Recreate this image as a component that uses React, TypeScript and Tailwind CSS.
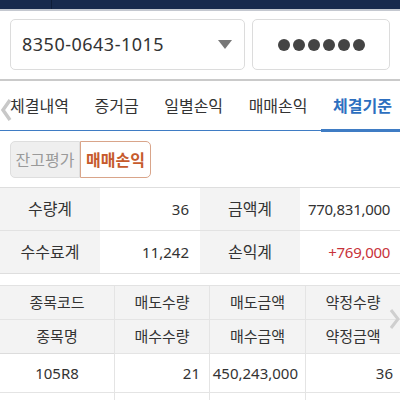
const font = { fontFamily: '"Noto Sans", "Noto Sans CJK KR", sans-serif' };

function Tabs() {
  const tabs = ['체결내역', '증거금', '일별손익', '매매손익', '체결기준'];
  return (
    <div className="relative h-[50px] flex items-center border-b border-[#3f7cc4]">
      <svg className="absolute left-0 top-[16px]" width="12" height="26" viewBox="0 0 12 26">
        <path d="M10 3 L3 13 L10 23" stroke="#c8c8c8" strokeWidth="3.5" fill="none" />
      </svg>
      <div className="flex w-full justify-between pl-[10px] pr-[8px] text-[16px] text-[#333]">
        {tabs.map((t, i) => (
          <span key={t} className={i === 4 ? 'font-bold text-[#2d6fbf]' : ''}>{t}</span>
        ))}
      </div>
      <div className="absolute right-0 bottom-[-2px] h-[3px] w-[79px] bg-[#3f7cc4]" />
    </div>
  );
}

export default function App() {
  const cell = 'flex items-center h-[42px] text-[15px]';
  return (
    <div className="w-[400px] h-[400px] bg-white overflow-hidden text-[#333]" style={font}>
      <div className="h-[9px] bg-[#182a4d] flex">
        <div className="w-[52px] border-r border-[#0f1d38]" />
      </div>
      <div className="h-[2px] bg-[#c4c8d0]" />
      <div className="flex gap-[7px] px-[10px] pt-[8px] pb-[9px]">
        <div className="w-[235px] h-[51px] border border-[#dcdcdc] rounded-[5px] flex items-center pl-[11px] pr-[12px] justify-between">
          <span className="text-[18px] tracking-[0.5px]">8350-0643-1015</span>
          <svg width="14" height="10" viewBox="0 0 14 10"><path d="M0 0 H14 L7 9 Z" fill="#777" /></svg>
        </div>
        <div className="flex-1 h-[51px] border border-[#dcdcdc] rounded-[5px] flex items-center justify-center gap-[3px]">
          {Array.from({ length: 6 }).map((_, i) => (
            <span key={i} className="w-[12px] h-[12px] rounded-full bg-[#444]" />
          ))}
        </div>
      </div>
      <div className="h-[2px] bg-[#cacaca]" />
      <Tabs />
      <div className="px-[10px] pt-[10px] pb-[9px] flex">
        <div className="flex h-[37px] text-[16px]">
          <div className="w-[70px] flex items-center justify-center bg-[#efefef] border border-[#dedede] rounded-l-[5px] text-[#9a9a9a]">잔고평가</div>
          <div className="w-[71px] flex items-center justify-center bg-white border border-[#d9a58a] rounded-r-[5px] text-[#c65a2c] font-bold">매매손익</div>
        </div>
      </div>
      <div className="border-t border-b border-[#dedede]">
        {[['수량계', '36', '금액계', '770,831,000', false], ['수수료계', '11,242', '손익계', '+769,000', true]].map((r, i) => (
          <div key={i} className={`grid grid-cols-[100px_100px_100px_100px] ${i === 0 ? 'border-b border-[#e2e2e2]' : ''}`}>
            <div className={`${cell} justify-center bg-[#f3f3f3] text-[16px]`}>{r[0]}</div>
            <div className={`${cell} justify-end pr-[11px]`}>{r[1]}</div>
            <div className={`${cell} justify-center bg-[#f3f3f3] text-[16px]`}>{r[2]}</div>
            <div className={`${cell} justify-end pr-[10px] tracking-[-0.3px] ${r[4] ? 'text-[#c8323a]' : ''}`}>{r[3]}</div>
          </div>
        ))}
      </div>
      <div className="mt-[11px] relative">
        <div className="grid grid-cols-[114px_95px_96px_95px] bg-[#f3f3f3] border-t border-[#e2e2e2] text-[15px]">
          {['종목코드', '매도수량', '매도금액', '약정수량'].map((h, i) => (
            <div key={h} className={`h-[34px] flex items-center justify-center border-b border-[#e4e4e4] ${i > 0 ? 'border-l border-[#e4e4e4]' : ''}`}>{h}</div>
          ))}
          {['종목명', '매수수량', '매수금액', '약정금액'].map((h, i) => (
            <div key={h} className={`h-[34px] flex items-center justify-center border-b border-[#dcdcdc] ${i > 0 ? 'border-l border-[#e4e4e4]' : ''}`}>{h}</div>
          ))}
        </div>
        <div className="grid grid-cols-[114px_95px_96px_95px] text-[15px] border-b border-[#e4e4e4]">
          <div className="h-[38px] flex items-center justify-center">105R8</div>
          <div className="h-[38px] flex items-center justify-end pr-[9px] border-l border-[#e4e4e4]">21</div>
          <div className="h-[38px] flex items-center justify-end pr-[7px] border-l border-[#e4e4e4]">450,243,000</div>
          <div className="h-[38px] flex items-center justify-end pr-[7px] border-l border-[#e4e4e4]">36</div>
        </div>
        <div className="grid grid-cols-[114px_95px_96px_95px] h-[20px]">
          <div />
          <div className="border-l border-[#e4e4e4]" />
          <div className="border-l border-[#e4e4e4]" />
          <div className="border-l border-[#e4e4e4]" />
        </div>
        <svg className="absolute right-[-1px] top-[22px]" width="12" height="24" viewBox="0 0 12 24">
          <path d="M2 3 L9 12 L2 21" stroke="#cfcfcf" strokeWidth="3" fill="none" />
        </svg>
      </div>
    </div>
  );
}
